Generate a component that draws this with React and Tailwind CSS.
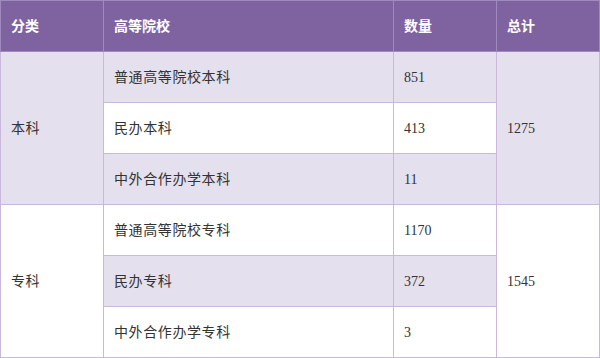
export default function App() {
  const font = { fontFamily: '"Liberation Serif", "Noto Sans CJK SC", serif' };
  const light = 'bg-[#e4e0ee]';
  const td = 'border border-[#c9b8dc] px-[10px] text-[14px] tracking-[0.6px] text-[#333] align-middle';
  const th = 'border border-[#a08abd] px-[10px] text-[14px] font-bold text-white text-left align-middle';

  const groups = [
    {
      name: '本科',
      total: '1275',
      bg: light,
      rows: [
        ['普通高等院校本科', '851', light],
        ['民办本科', '413', 'bg-white'],
        ['中外合作办学本科', '11', light],
      ],
    },
    {
      name: '专科',
      total: '1545',
      bg: 'bg-white',
      rows: [
        ['普通高等院校专科', '1170', 'bg-white'],
        ['民办专科', '372', light],
        ['中外合作办学专科', '3', 'bg-white'],
      ],
    },
  ];

  return (
    <div className="w-[600px] h-[358px] bg-white" style={font}>
      <table className="w-[599px] border-collapse table-fixed">
        <colgroup>
          <col className="w-[103px]" />
          <col className="w-[290px]" />
          <col className="w-[103px]" />
          <col className="w-[103px]" />
        </colgroup>
        <thead>
          <tr className="h-[51px] bg-[#7f63a1]">
            <th className={th}>分类</th>
            <th className={th}>高等院校</th>
            <th className={th}>数量</th>
            <th className={th}>总计</th>
          </tr>
        </thead>
        <tbody>
          {groups.map((g) =>
            g.rows.map((r, i) => (
              <tr key={r[0]} className="h-[51px]">
                {i === 0 && (
                  <td rowSpan={3} className={`${td} ${g.bg}`}>
                    {g.name}
                  </td>
                )}
                <td className={`${td} ${r[2]}`}>{r[0]}</td>
                <td className={`${td} ${r[2]} tracking-normal`}>{r[1]}</td>
                {i === 0 && (
                  <td rowSpan={3} className={`${td} ${g.bg} tracking-normal`}>
                    {g.total}
                  </td>
                )}
              </tr>
            ))
          )}
        </tbody>
      </table>
    </div>
  );
}
